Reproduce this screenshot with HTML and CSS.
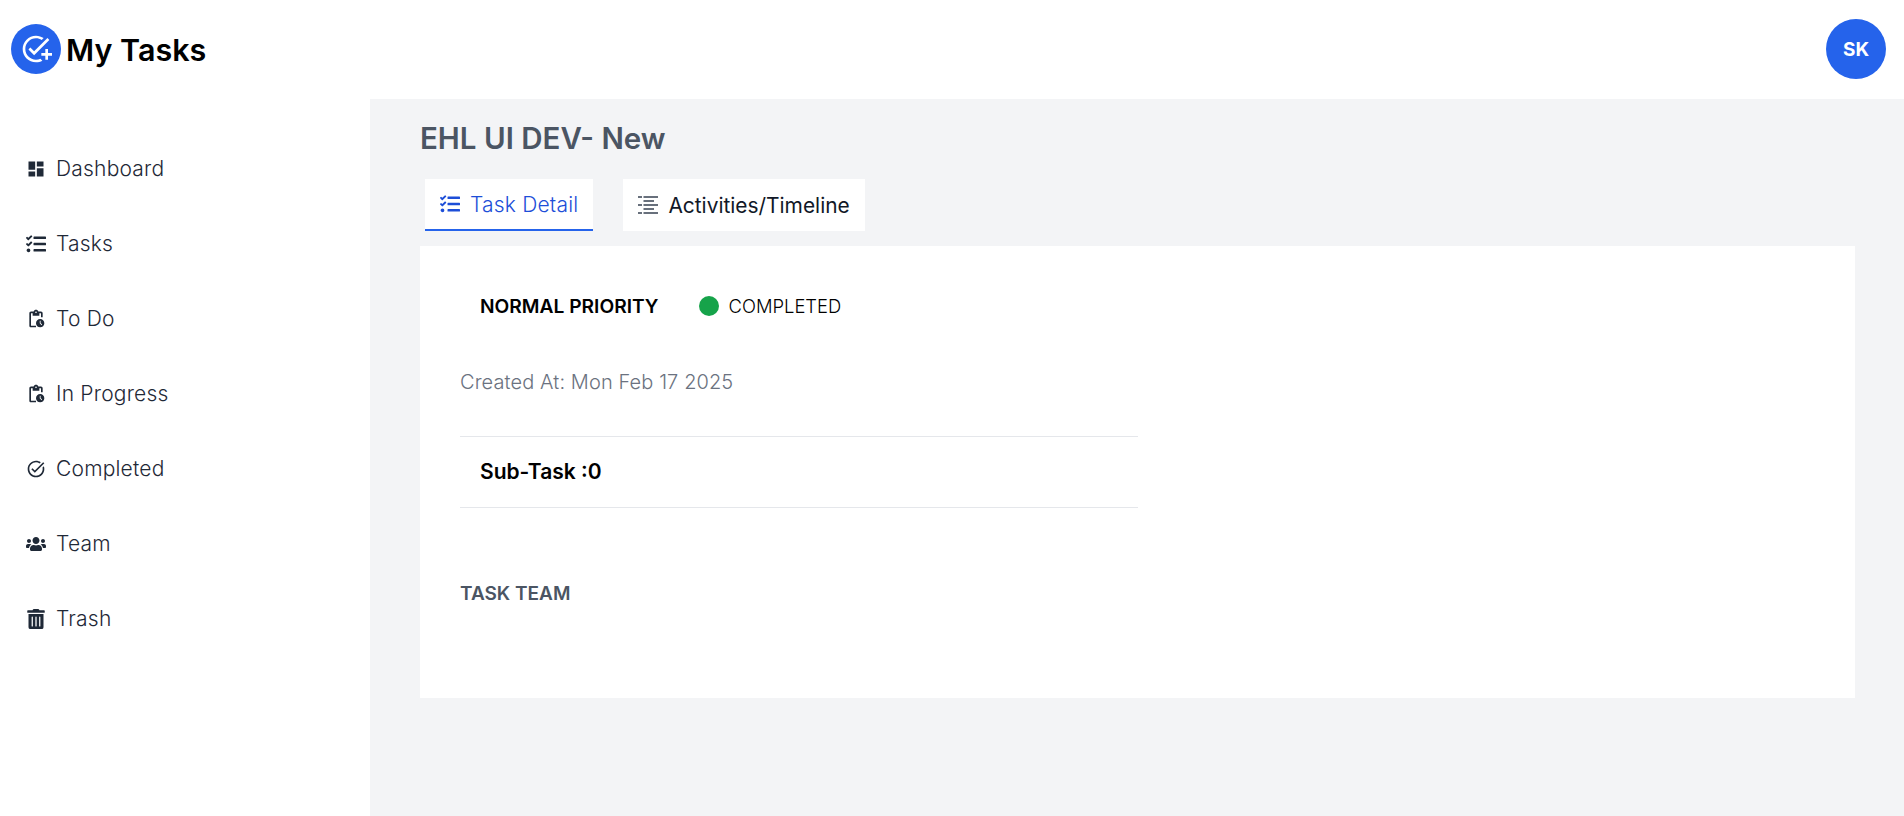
FILE: index.html
```html
<!DOCTYPE html>
<html lang="en">
<head>
  <meta charset="UTF-8">
  <title>My Tasks</title>
  <link rel="stylesheet" href="styles.css">
</head>
<body>

  <header class="topbar">
    <div class="brand">
      <span class="brand-icon">
        <svg viewBox="0 0 24 24" width="32" height="32"><path d="M22 5.18L10.59 16.6l-4.24-4.24 1.41-1.41 2.83 2.83 10-10L22 5.18zM12 20c-4.41 0-8-3.59-8-8s3.59-8 8-8c1.57 0 3.04.46 4.28 1.25l1.45-1.45C16.1 2.67 14.13 2 12 2 6.48 2 2 6.48 2 12s4.48 10 10 10c1.73 0 3.36-.44 4.78-1.22l-1.5-1.5C14.28 19.74 13.17 20 12 20zM19 15h-3v2h3v3h2v-3h3v-2h-3v-3h-2v3z"/></svg>
      </span>
      <span class="brand-name">My Tasks</span>
    </div>
    <div class="avatar">SK</div>
  </header>

  <div class="layout">
    <nav class="sidebar">
      <a class="nav-item">
        <svg class="nav-icon" viewBox="0 0 24 24"><path d="M3 13h8V3H3v10zm0 8h8v-6H3v6zm10 0h8V11h-8v10zm0-18v6h8V3h-8z"/></svg>
        <span>Dashboard</span>
      </a>
      <a class="nav-item">
        <svg class="nav-icon" viewBox="0 0 512 512"><path d="M139.61 35.5a12 12 0 0 0-17 0L58.93 98.81l-22.7-22.12a12 12 0 0 0-17 0L3.53 92.41a12 12 0 0 0 0 17l47.59 47.4a12.78 12.78 0 0 0 17.61 0l15.59-15.62L156.52 69a12.09 12.09 0 0 0 .09-17zm0 159.19a12 12 0 0 0-17 0l-63.68 63.72-22.7-22.1a12 12 0 0 0-17 0L3.53 252a12 12 0 0 0 0 17L51 316.5a12.77 12.77 0 0 0 17.6 0l15.7-15.69 72.2-72.22a12 12 0 0 0 .09-16.9zM64 368c-26.49 0-48.59 21.5-48.59 48S37.53 464 64 464a48 48 0 0 0 0-96zm432 16H208a16 16 0 0 0-16 16v32a16 16 0 0 0 16 16h288a16 16 0 0 0 16-16v-32a16 16 0 0 0-16-16zm0-320H208a16 16 0 0 0-16 16v32a16 16 0 0 0 16 16h288a16 16 0 0 0 16-16V80a16 16 0 0 0-16-16zm0 160H208a16 16 0 0 0-16 16v32a16 16 0 0 0 16 16h288a16 16 0 0 0 16-16v-32a16 16 0 0 0-16-16z"/></svg>
        <span>Tasks</span>
      </a>
      <a class="nav-item">
        <svg class="nav-icon" viewBox="0 0 24 24"><path d="M17 12c-2.76 0-5 2.24-5 5s2.24 5 5 5 5-2.24 5-5-2.24-5-5-5zm1.65 7.35L16.5 17.2V14h1v2.79l1.85 1.85-.7.71zM18 3h-3.18C14.4 1.84 13.3 1 12 1s-2.4.84-2.82 2H6c-1.1 0-2 .9-2 2v15c0 1.1.9 2 2 2h6v-2H6V5h2v3h8V5h2v5h2V5c0-1.1-.9-2-2-2zm-6 2c-.55 0-1-.45-1-1s.45-1 1-1 1 .45 1 1-.45 1-1 1z"/></svg>
        <span>To Do</span>
      </a>
      <a class="nav-item">
        <svg class="nav-icon" viewBox="0 0 24 24"><path d="M17 12c-2.76 0-5 2.24-5 5s2.24 5 5 5 5-2.24 5-5-2.24-5-5-5zm1.65 7.35L16.5 17.2V14h1v2.79l1.85 1.85-.7.71zM18 3h-3.18C14.4 1.84 13.3 1 12 1s-2.4.84-2.82 2H6c-1.1 0-2 .9-2 2v15c0 1.1.9 2 2 2h6v-2H6V5h2v3h8V5h2v5h2V5c0-1.1-.9-2-2-2zm-6 2c-.55 0-1-.45-1-1s.45-1 1-1 1 .45 1 1-.45 1-1 1z"/></svg>
        <span>In Progress</span>
      </a>
      <a class="nav-item">
        <svg class="nav-icon" viewBox="0 0 24 24"><path d="M22 5.18L10.59 16.6l-4.24-4.24 1.41-1.41 2.83 2.83 10-10L22 5.18zm-2.21 5.04c.13.57.21 1.17.21 1.78 0 4.42-3.58 8-8 8s-8-3.58-8-8 3.58-8 8-8c1.58 0 3.04.46 4.28 1.25l1.44-1.44C16.1 2.67 14.13 2 12 2 6.48 2 2 6.48 2 12s4.48 10 10 10 10-4.48 10-10c0-1.19-.22-2.33-.6-3.39l-1.61 1.61z"/></svg>
        <span>Completed</span>
      </a>
      <a class="nav-item">
        <svg class="nav-icon" viewBox="0 0 640 512"><path d="M96 224c35.3 0 64-28.7 64-64s-28.7-64-64-64-64 28.7-64 64 28.7 64 64 64zm448 0c35.3 0 64-28.7 64-64s-28.7-64-64-64-64 28.7-64 64 28.7 64 64 64zm32 32h-64c-17.6 0-33.5 7.1-45.1 18.6 40.3 22.1 68.9 62 75.1 109.4h66c17.7 0 32-14.3 32-32v-32c0-35.3-28.7-64-64-64zm-256 0c61.9 0 112-50.1 112-112S381.9 32 320 32 208 82.1 208 144s50.1 112 112 112zm76.8 32h-8.3c-20.8 10-43.9 16-68.5 16s-47.6-6-68.5-16h-8.3C179.6 288 128 339.6 128 403.2V432c0 26.5 21.5 48 48 48h288c26.5 0 48-21.5 48-48v-28.8c0-63.6-51.6-115.2-115.2-115.2zm-223.7-13.4C161.5 263.1 145.6 256 128 256H64c-35.3 0-64 28.7-64 64v32c0 17.7 14.3 32 32 32h65.9c6.3-47.4 34.9-87.3 75.2-109.4z"/></svg>
        <span>Team</span>
      </a>
      <a class="nav-item">
        <svg class="nav-icon" viewBox="0 0 448 512"><path d="M32 464a48 48 0 0 0 48 48h288a48 48 0 0 0 48-48V128H32zm272-256a16 16 0 0 1 32 0v224a16 16 0 0 1-32 0zm-96 0a16 16 0 0 1 32 0v224a16 16 0 0 1-32 0zm-96 0a16 16 0 0 1 32 0v224a16 16 0 0 1-32 0zM432 32H312l-9.4-18.7A24 24 0 0 0 281.1 0H166.8a23.72 23.72 0 0 0-21.4 13.3L136 32H16A16 16 0 0 0 0 48v32a16 16 0 0 0 16 16h416a16 16 0 0 0 16-16V48a16 16 0 0 0-16-16z"/></svg>
        <span>Trash</span>
      </a>
    </nav>

    <main class="content">
      <h1 class="task-title">EHL UI DEV- New</h1>

      <div class="tabs">
        <div class="tab active">
          <svg class="tab-icon" viewBox="0 0 512 512"><path d="M139.61 35.5a12 12 0 0 0-17 0L58.93 98.81l-22.7-22.12a12 12 0 0 0-17 0L3.53 92.41a12 12 0 0 0 0 17l47.59 47.4a12.78 12.78 0 0 0 17.61 0l15.59-15.62L156.52 69a12.09 12.09 0 0 0 .09-17zm0 159.19a12 12 0 0 0-17 0l-63.68 63.72-22.7-22.1a12 12 0 0 0-17 0L3.53 252a12 12 0 0 0 0 17L51 316.5a12.77 12.77 0 0 0 17.6 0l15.7-15.69 72.2-72.22a12 12 0 0 0 .09-16.9zM64 368c-26.49 0-48.59 21.5-48.59 48S37.53 464 64 464a48 48 0 0 0 0-96zm432 16H208a16 16 0 0 0-16 16v32a16 16 0 0 0 16 16h288a16 16 0 0 0 16-16v-32a16 16 0 0 0-16-16zm0-320H208a16 16 0 0 0-16 16v32a16 16 0 0 0 16 16h288a16 16 0 0 0 16-16V80a16 16 0 0 0-16-16zm0 160H208a16 16 0 0 0-16 16v32a16 16 0 0 0 16 16h288a16 16 0 0 0 16-16v-32a16 16 0 0 0-16-16z"/></svg>
          <span>Task Detail</span>
        </div>
        <div class="tab">
          <svg class="tab-icon" viewBox="0 0 20 18"><path d="M0 .3h4v1.4H0zM5.5 .3H20v1.4H5.5zM5.5 4.3H16v1.4H5.5zM0 8.3h4v1.4H0zM5.5 8.3H20v1.4H5.5zM5.5 12.3H16v1.4H5.5zM0 16.3h4v1.4H0zM5.5 16.3H20v1.4H5.5z"/></svg>
          <span>Activities/Timeline</span>
        </div>
      </div>

      <section class="panel">
        <div class="status-row">
          <span class="priority">NORMAL PRIORITY</span>
          <span class="status"><span class="status-dot"></span>COMPLETED</span>
        </div>
        <p class="created">Created At: Mon Feb 17 2025</p>
        <div class="subtask">Sub-Task :0</div>
        <h2 class="team-title">TASK TEAM</h2>
      </section>
    </main>
  </div>

</body>
</html>
```

FILE: styles.css
```css
* {
  box-sizing: border-box;
}

body {
  margin: 0;
  height: 816px;
  overflow: hidden;
  font-family: Inter, "Open Sans", sans-serif;
  background-color: #fff;
  color: #000;
}

.topbar {
  display: flex;
  justify-content: space-between;
  align-items: center;
  height: 99px;
  padding: 0 18px 1px 11px;
}

.brand {
  display: flex;
  align-items: center;
  gap: 5px;
}

.brand-icon {
  display: flex;
  align-items: center;
  justify-content: center;
  width: 50px;
  height: 50px;
  border-radius: 50%;
  background-color: #2563eb;
  fill: white;
}

.brand-name {
  font-size: 30.5px;
  font-weight: 600;
}

.avatar {
  display: flex;
  align-items: center;
  justify-content: center;
  width: 60px;
  height: 60px;
  border-radius: 50%;
  background-color: #2563eb;
  color: white;
  font-size: 19px;
  font-weight: 700;
}

.layout {
  display: flex;
  height: 717px;
}

.sidebar {
  display: flex;
  flex-direction: column;
  flex: 0 0 370px;
  padding: 32px 0 0 26px;
}

.nav-item {
  display: flex;
  align-items: center;
  gap: 10px;
  height: 75px;
  color: #1f2937;
  font-size: 21px;
  font-weight: 300;
  letter-spacing: 0.2px;
}

.nav-icon {
  width: 20px;
  height: 20px;
  fill: #1f2937;
}

.content {
  flex: 1;
  padding: 20px 49px 0 50px;
  background-color: #f3f4f6;
}

.task-title {
  margin: 0;
  font-size: 29.5px;
  font-weight: 600;
  line-height: 39px;
  color: #4b5563;
}

.tabs {
  display: flex;
  gap: 30px;
  margin: 21px 0 15px 5px;
}

.tab {
  display: flex;
  align-items: center;
  gap: 10px;
  height: 52px;
  padding: 0 15px;
  background-color: white;
  color: #111827;
  font-size: 20.9px;
  font-weight: 400;
}

.tab-icon {
  width: 20px;
  height: 20px;
  fill: #374151;
}

.tab.active {
  border-bottom: 2px solid #2563eb;
  color: #1d4ed8;
  font-size: 21px;
  font-weight: 300;
  letter-spacing: 0.2px;
}

.tab.active .tab-icon {
  fill: #1d4ed8;
}

.panel {
  height: 452px;
  padding: 40px;
  background-color: white;
}

.status-row {
  display: flex;
  align-items: center;
  gap: 40px;
  height: 40px;
  padding-left: 20px;
}

.priority {
  font-size: 19.2px;
  font-weight: 600;
}

.status {
  display: flex;
  align-items: center;
  gap: 10px;
  font-size: 18.4px;
  font-weight: 300;
}

.status-dot {
  width: 20px;
  height: 20px;
  border-radius: 50%;
  background-color: #16a34a;
}

.created {
  margin: 41px 0 0;
  line-height: 30px;
  font-size: 20px;
  font-weight: 300;
  letter-spacing: 0.1px;
  color: #6b7280;
}

.subtask {
  width: 678px;
  margin-top: 39px;
  padding: 0 20px;
  line-height: 70px;
  border-top: 1px solid #e5e7eb;
  border-bottom: 1px solid #e5e7eb;
  font-size: 21px;
  font-weight: 600;
}

.team-title {
  margin: 72px 0 0;
  line-height: 28px;
  font-size: 19px;
  font-weight: 600;
  color: #4b5563;
}
```
